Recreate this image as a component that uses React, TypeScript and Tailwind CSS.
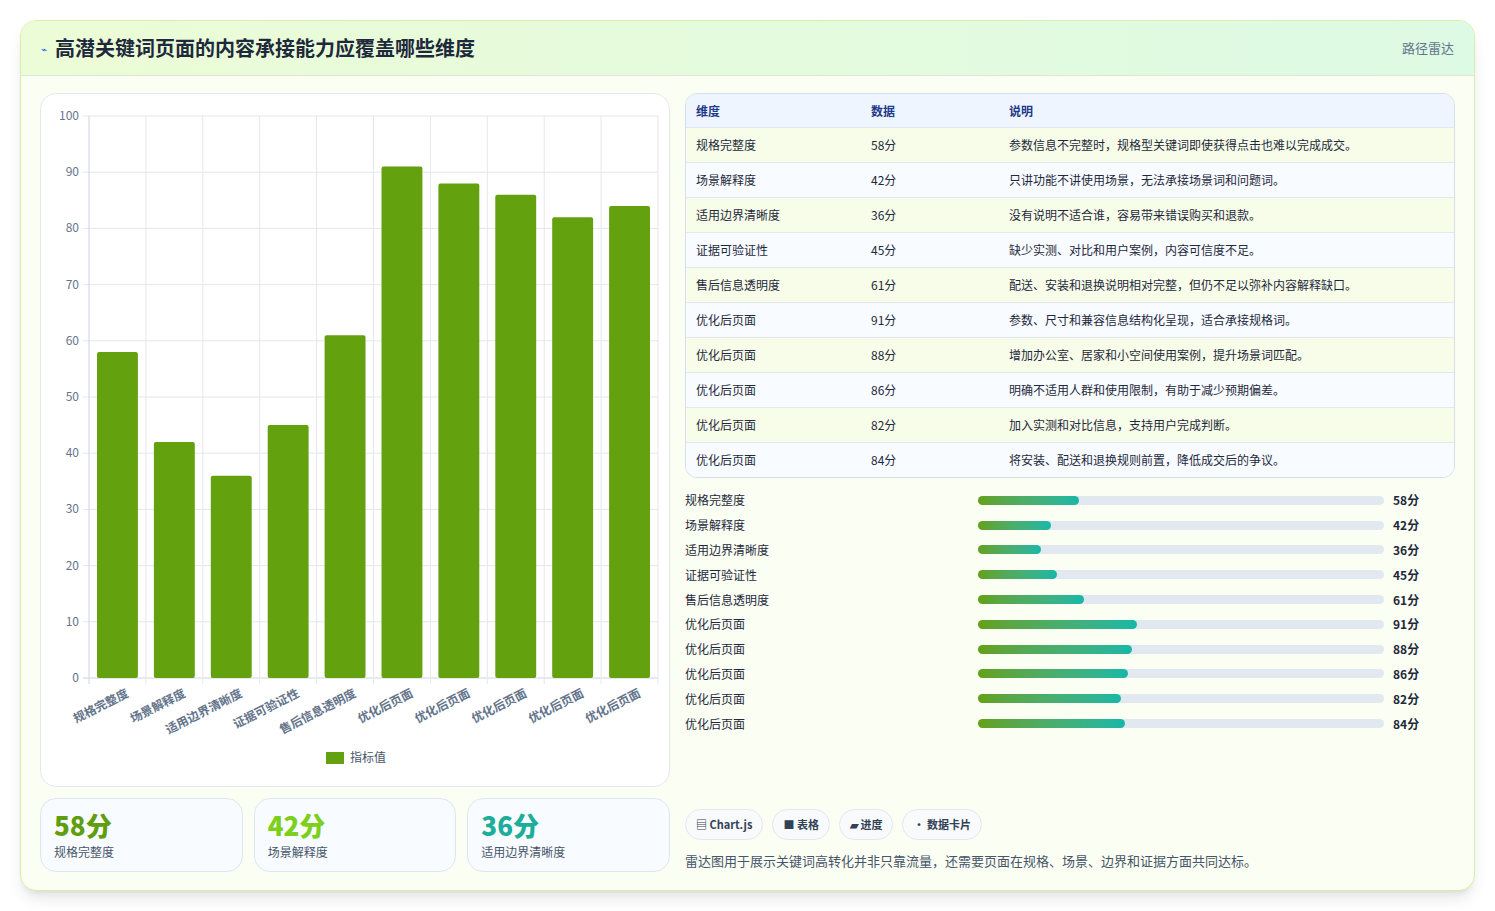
const rows = [
  { name: "规格完整度", v: 58, note: "参数信息不完整时，规格型关键词即使获得点击也难以完成成交。" },
  { name: "场景解释度", v: 42, note: "只讲功能不讲使用场景，无法承接场景词和问题词。" },
  { name: "适用边界清晰度", v: 36, note: "没有说明不适合谁，容易带来错误购买和退款。" },
  { name: "证据可验证性", v: 45, note: "缺少实测、对比和用户案例，内容可信度不足。" },
  { name: "售后信息透明度", v: 61, note: "配送、安装和退换说明相对完整，但仍不足以弥补内容解释缺口。" },
  { name: "优化后页面", v: 91, note: "参数、尺寸和兼容信息结构化呈现，适合承接规格词。" },
  { name: "优化后页面", v: 88, note: "增加办公室、居家和小空间使用案例，提升场景词匹配。" },
  { name: "优化后页面", v: 86, note: "明确不适用人群和使用限制，有助于减少预期偏差。" },
  { name: "优化后页面", v: 82, note: "加入实测和对比信息，支持用户完成判断。" },
  { name: "优化后页面", v: 84, note: "将安装、配送和退换规则前置，降低成交后的争议。" },
];

const font = { fontFamily: '"Noto Sans CJK SC", "Noto Sans", sans-serif' };

function Chart() {
  const x0 = 48, top = 22, bottom = 584, w = 569;
  const step = w / 10;
  const y = (v: number) => bottom - ((bottom - top) * v) / 100;
  return (
    <svg width="628" height="692" className="block">
      {[0, 10, 20, 30, 40, 50, 60, 70, 80, 90, 100].map((t) => (
        <g key={t}>
          <line x1={x0 - 6} x2={x0 + w} y1={y(t)} y2={y(t)} stroke={t === 0 ? "#cbd5e1" : "#e5e7eb"} />
          <text x={x0 - 10} y={y(t) + 4} textAnchor="end" fontSize="12" fill="#64748b">{t}</text>
        </g>
      ))}
      {Array.from({ length: 11 }).map((_, i) => (
        <line key={i} x1={x0 + i * step} x2={x0 + i * step} y1={top} y2={bottom + 6} stroke={i === 0 ? "#cbd5e1" : "#e5e7eb"} />
      ))}
      {rows.map((r, i) => (
        <g key={i}>
          <rect x={x0 + i * step + 8} y={y(r.v)} width={step - 16} height={bottom - y(r.v)} rx="2" fill="#63a10f" />
          <text
            transform={`translate(${x0 + i * step + step / 2 + 12},${bottom + 18}) rotate(-27)`}
            textAnchor="end"
            fontSize="12"
            fontWeight="700"
            fill="#64748b"
          >
            {r.name}
          </text>
        </g>
      ))}
      <rect x="285" y="658" width="18" height="12" fill="#63a10f" />
      <text x="309" y="668" fontSize="12" fill="#475569">指标值</text>
    </svg>
  );
}

export default function App() {
  return (
    <div className="min-h-[911px] bg-white p-5" style={font}>
      <div className="rounded-2xl border border-[#d6f0a8] bg-[#fbfef3] shadow-lg overflow-hidden">
        <div className="flex h-[55px] items-center justify-between border-b border-[#dbe7d3] bg-gradient-to-r from-[#ecfcd6] to-[#ddfae4] px-5">
          <div className="flex items-center gap-2">
            <span className="text-[10px] text-[#2563eb]">⌁</span>
            <h1 className="text-[20px] font-bold text-[#1e293b]">高潜关键词页面的内容承接能力应覆盖哪些维度</h1>
          </div>
          <span className="text-[13px] text-[#64748b]">路径雷达</span>
        </div>
        <div className="flex gap-[15px] px-[19px] pb-[18px] pt-[17px]">
          <div className="flex w-[630px] flex-col gap-[11px]">
            <div className="h-[694px] rounded-2xl border border-[#e2e8f0] bg-white">
              <Chart />
            </div>
            <div className="grid grid-cols-3 gap-[11px]">
              {[
                ["58分", "规格完整度", "text-[#5f9e0e]"],
                ["42分", "场景解释度", "text-[#7ccf1a]"],
                ["36分", "适用边界清晰度", "text-[#1cae9a]"],
              ].map(([v, l, c]) => (
                <div key={l} className="h-[74px] rounded-2xl border border-[#dde7f3] bg-[#f8fbff] px-[13px] pt-[10px]">
                  <div className={`text-[26px] font-extrabold leading-[32px] ${c}`}>{v}</div>
                  <div className="mt-[2px] text-[12px] text-[#475569]">{l}</div>
                </div>
              ))}
            </div>
          </div>
          <div className="flex flex-1 flex-col">
            <div className="overflow-hidden rounded-xl border border-[#d6dee8] text-[12px] text-[#1e293b]">
              <div className="flex h-[33px] items-center bg-[#eef5ff] font-bold text-[#1e3a8a]">
                <div className="w-[185px] pl-[10px]">维度</div>
                <div className="w-[138px]">数据</div>
                <div>说明</div>
              </div>
              {rows.map((r, i) => (
                <div key={i} className={`flex h-[35px] items-center border-t border-[#e2e8f0] ${i % 2 ? "bg-[#f8fbff]" : "bg-[#f8fde9]"}`}>
                  <div className="w-[185px] pl-[10px]">{r.name}</div>
                  <div className="w-[138px]">{r.v}分</div>
                  <div>{r.note}</div>
                </div>
              ))}
            </div>
            <div className="mt-[10px] flex flex-col">
              {rows.map((r, i) => (
                <div key={i} className="flex h-[24.8px] items-center text-[12px] text-[#1e293b]">
                  <div className="w-[293px]">{r.name}</div>
                  <div className="h-[9px] w-[406px] rounded-full bg-[#e2e8f0]">
                    <div className="h-full rounded-full bg-gradient-to-r from-[#63a10f] to-[#14b8a6]" style={{ width: `${r.v * 0.43}%` }} />
                  </div>
                  <div className="ml-[9px] font-bold">{r.v}分</div>
                </div>
              ))}
            </div>
            <div className="mt-auto">
              <div className="flex gap-[9px] text-[11px] font-bold text-[#334155]">
                {["▤ Chart.js", "■ 表格", "▰ 进度", "• 数据卡片"].map((t) => (
                  <span key={t} className="rounded-full border border-[#e2e8f0] bg-[#f8fafc] px-[10px] py-[6px]">{t}</span>
                ))}
              </div>
              <p className="mt-[11px] mb-[2px] text-[13px] text-[#475569]">雷达图用于展示关键词高转化并非只靠流量，还需要页面在规格、场景、边界和证据方面共同达标。</p>
            </div>
          </div>
        </div>
      </div>
    </div>
  );
}
